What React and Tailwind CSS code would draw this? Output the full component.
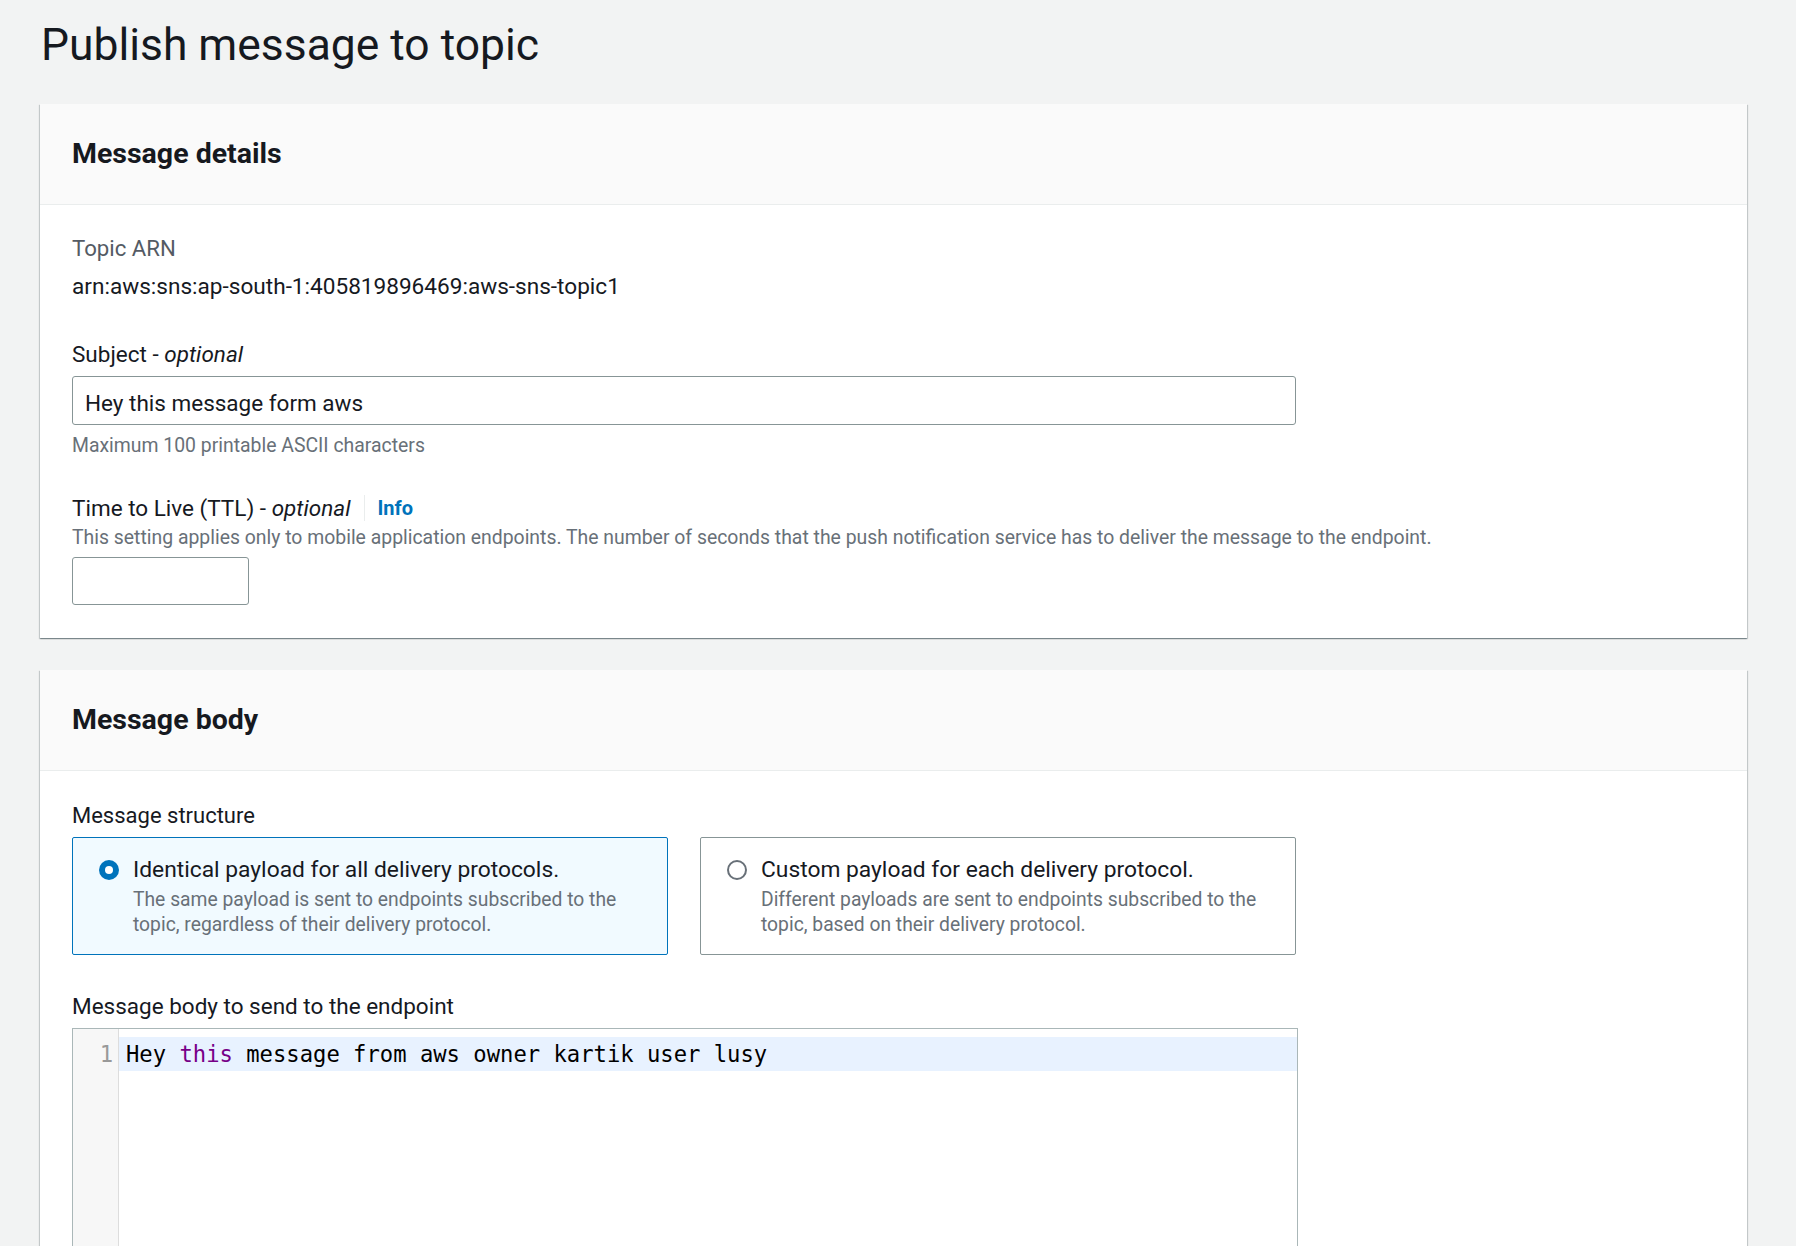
import React from "react";

const cardShadow =
  "shadow-[0_1px_1px_0_rgba(0,28,36,0.3),1px_1px_1px_0_rgba(0,28,36,0.15),-1px_1px_1px_0_rgba(0,28,36,0.15)]";

const mono = { fontFamily: "'DejaVu Sans Mono', monospace" };

const Card = ({ title, children, className = "" }) => (
  <div className={`bg-white ${cardShadow} ${className}`}>
    <div className="h-[101px] bg-[#fafafa] border-b border-[#eaeded] px-[32px] flex items-center">
      <h2 className="text-[28.5px] font-bold text-[#16191f] leading-[36px]">{title}</h2>
    </div>
    {children}
  </div>
);

const RadioTile = ({ selected, title, desc }) => (
  <div
    className={`flex-1 h-[118px] rounded-[2px] border pl-[26px] pr-4 pt-[17px] flex gap-[14px] ${
      selected ? "bg-[#f1faff] border-[#0073bb]" : "bg-white border-[#879596]"
    }`}
  >
    <div className="pt-[5px]">
      {selected ? (
        <div className="w-[20px] h-[20px] rounded-full bg-[#0073bb] flex items-center justify-center">
          <div className="w-[8px] h-[8px] rounded-full bg-white" />
        </div>
      ) : (
        <div className="w-[20px] h-[20px] rounded-full border-2 border-[#687078] bg-white" />
      )}
    </div>
    <div>
      <div className="text-[22.8px] leading-[30px] text-[#16191f]">{title}</div>
      <div className="text-[19.3px] leading-[25px] text-[#687078] mt-[2px]">{desc}</div>
    </div>
  </div>
);

export default function App() {
  return (
    <div
      className="min-h-screen bg-[#f2f3f3] pl-[40px] pr-[49px] pt-[19px] pb-10 text-[#16191f]"
      style={{ fontFamily: "Roboto, 'Noto Sans', sans-serif" }}
    >
      <h1 className="text-[44.4px] leading-[52px] font-normal pl-[1px] mb-[33px]">Publish message to topic</h1>

      {/* Message details */}
      <Card title="Message details">
        <div className="px-[32px] pt-[28px] pb-[33px]">
          <div className="text-[22.2px] leading-[30px] text-[#545b64]">Topic ARN</div>
          <div className="text-[22.6px] leading-[30px] mt-[9px]">arn:aws:sns:ap-south-1:405819896469:aws-sns-topic1</div>

          <div className="text-[22.5px] leading-[30px] mt-[37px]">
            Subject - <span className="italic">optional</span>
          </div>
          <div className="w-[1224px] h-[49px] mt-[7px] border border-[#879596] rounded-[3px] bg-white flex items-center px-[12px] pt-[6px] text-[22.5px]">
            Hey this message form aws
          </div>
          <div className="text-[19.4px] leading-[26px] text-[#687078] mt-[8px]">Maximum 100 printable ASCII characters</div>

          <div className="flex items-center mt-[34px] h-[30px]">
            <span className="text-[22.5px] leading-[30px]">
              Time to Live (TTL) - <span className="italic">optional</span>
            </span>
            <span className="w-px h-[26px] bg-[#eaeded] ml-[14px] mr-[12px]" />
            <span className="text-[20px] font-bold text-[#0073bb]">Info</span>
          </div>
          <div className="text-[19.4px] leading-[26px] text-[#687078] mt-[2px]">
            This setting applies only to mobile application endpoints. The number of seconds that the push notification service has to deliver the message to the endpoint.
          </div>
          <div className="w-[177px] h-[48px] mt-[6px] border border-[#879596] rounded-[3px] bg-white" />
        </div>
      </Card>

      {/* Message body */}
      <Card title="Message body" className="mt-[32px]">
        <div className="px-[32px] pt-[30px] pb-[40px]">
          <div className="text-[22px] leading-[30px]">Message structure</div>
          <div className="w-[1224px] flex gap-[32px] mt-[6px]">
            <RadioTile
              selected
              title="Identical payload for all delivery protocols."
              desc={
                <>
                  The same payload is sent to endpoints subscribed to the
                  <br />
                  topic, regardless of their delivery protocol.
                </>
              }
            />
            <RadioTile
              title="Custom payload for each delivery protocol."
              desc={
                <>
                  Different payloads are sent to endpoints subscribed to the
                  <br />
                  topic, based on their delivery protocol.
                </>
              }
            />
          </div>

          <div className="text-[22.5px] leading-[30px] mt-[36px]">Message body to send to the endpoint</div>
          <div className="w-[1226px] h-[320px] mt-[7px] border border-[#aab7b8] bg-white flex">
            <div className="w-[46px] shrink-0 bg-[#f7f7f7] border-r border-[#dddddd] pt-[8px]">
              <div className="h-[34px] text-right pr-[5px] text-[22.2px] leading-[34px] text-[#999999]" style={mono}>
                1
              </div>
            </div>
            <div className="flex-1 pt-[8px]">
              <div className="h-[34px] bg-[#e8f2ff] pl-[7px] text-[22.2px] leading-[34px] text-black whitespace-pre" style={mono}>
                Hey <span className="text-[#770088]">this</span> message from aws owner kartik user lusy
              </div>
            </div>
          </div>
        </div>
      </Card>
    </div>
  );
}
